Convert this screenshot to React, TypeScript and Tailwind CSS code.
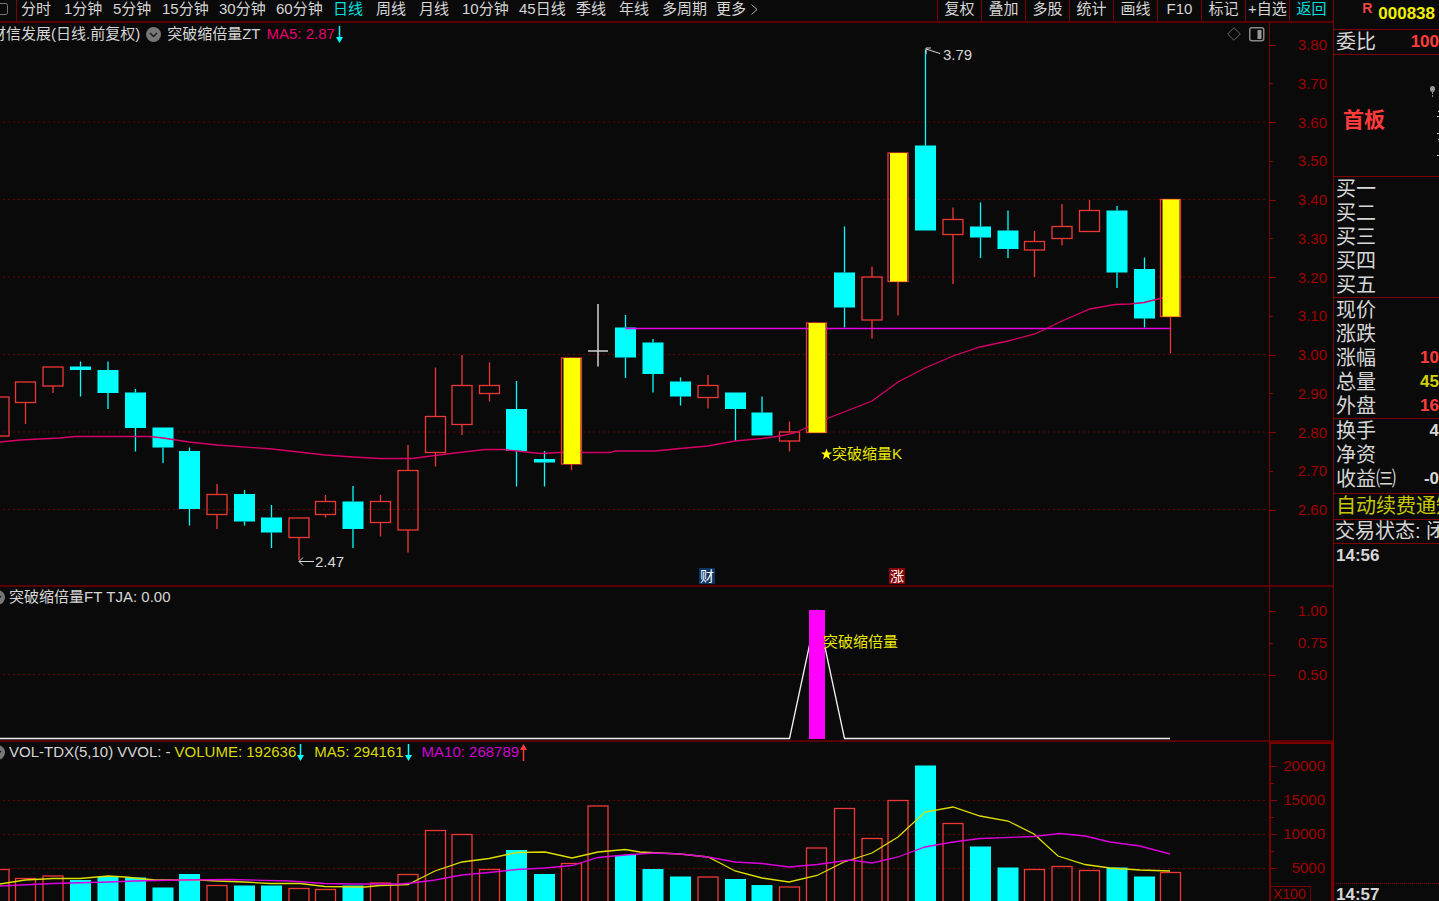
import type { ReactNode } from "react";

// x, kind, high, top, bottom, low, volume top
// kinds: u = hollow rise, d = solid fall, y = highlighted breakout, w = doji
type Kind = "u" | "d" | "y" | "w";
type Bar = [number, Kind, number, number, number, number, number];

const bars: Bar[] = [
  [-1, "u", 397, 397, 436, 436, 869.5],
  [25.5, "u", 382, 382, 402.5, 424, 878.5],
  [53, "u", 367, 367, 386, 393, 876],
  [80.5, "d", 361.5, 366.5, 370, 396.5, 880],
  [108, "d", 361.5, 370, 393, 409, 877],
  [135.5, "d", 389, 392.5, 428, 451.5, 877.5],
  [163, "d", 427.5, 427.5, 447.5, 463, 887.5],
  [189.5, "d", 447.5, 451, 509, 525.5, 874],
  [217, "u", 484, 494.5, 514.5, 529, 885.5],
  [244.5, "d", 490, 494, 521.5, 525.5, 885.5],
  [271.5, "d", 505, 517.5, 532.5, 548, 885.5],
  [299, "u", 518, 518, 537.5, 560, 888.5],
  [325.5, "u", 495, 501.5, 514.5, 517.5, 889.5],
  [353, "d", 486, 501.5, 529, 548, 885.5],
  [380.5, "u", 495, 501.5, 522.5, 536.5, 883],
  [408, "u", 445, 470.5, 530, 552.5, 874.5],
  [435.5, "u", 367.5, 416.5, 452.5, 466.5, 830.5],
  [462, "u", 355, 385.5, 424.5, 435, 834.5],
  [489.5, "u", 362.5, 385.5, 393.5, 401.5, 869.5],
  [516.5, "d", 381, 409, 451, 486.5, 850],
  [544.5, "d", 451, 459, 462.5, 486.5, 874],
  [571.5, "y", 358, 358, 464, 470, 863.5],
  [598, "w", 304, 351, 351, 366.5, 806],
  [625.5, "d", 315, 327.5, 357.5, 378, 855],
  [653, "d", 339, 342.5, 374, 392.5, 869],
  [680.5, "d", 377.5, 381.5, 396.5, 405.5, 876.5],
  [708, "u", 375, 385.5, 397.5, 408.5, 877],
  [735.5, "d", 392.5, 392.5, 409, 441, 879],
  [762, "d", 396.5, 412.5, 435.5, 435.5, 885],
  [789.5, "u", 421.5, 432, 441, 451.5, 887],
  [816.5, "y", 323, 323, 432.5, 432.5, 848],
  [844.5, "d", 226.5, 272.5, 307.5, 327.5, 808.5],
  [872, "u", 266.5, 277, 320, 338.5, 838.5],
  [898, "y", 153, 153, 281.5, 315.5, 800.5],
  [925.5, "d", 50, 145.5, 230.5, 230.5, 765.5],
  [953, "u", 207.5, 219.5, 234.5, 284, 823.5],
  [980.5, "d", 202.5, 226.5, 237.5, 258, 846.5],
  [1008, "d", 210.5, 230.5, 249, 258, 867.5],
  [1034.5, "u", 231, 241.5, 250, 277, 869.5],
  [1062, "u", 204, 226.5, 238.5, 245.5, 866.5],
  [1089.5, "u", 200, 210.5, 231.5, 231.5, 870.5],
  [1117, "d", 206, 210.5, 272.5, 288, 867.5],
  [1144.5, "d", 257.5, 269, 318.5, 327.5, 876.5],
  [1170.5, "y", 199.5, 199.5, 316.5, 353.5, 872.5],
];

// gapped up but closed under its open: solid candle, hollow volume
const GAP_UP_X = 844.5;

const PRICE_MA =
  "0,442 20,440 40,439 60,438 75,436.5 150,436.5 163,438 189,442 217,445 272,449 325,455 353,457 380,458.5 412,458.5 435,455.5 455,453 485,449.5 503,449.5 517,451 540,453.5 560,452.5 610,452.5 615,451 655,451 680,448.5 708,446 735,441 762,438.5 780,436 795,433 808,427 826,419 844,412 872,401 898,382 925,368 953,356 980,347 1008,341 1035,334 1062,321 1090,309 1115,304.5 1130,304 1144,302.5 1162,298 1170,297";
const VOL_MA5 =
  "0,884 25,880 53,878.5 80,878.5 108,876 125,877 155,880 200,880 217,881 244,882 270,883.5 300,883.5 325,886.5 365,887 380,885.5 408,884.5 417,880 435,871 462,862 489,858.5 505,855 517,852.5 545,852 572,858 598,852 625,849.5 640,852 680,854 708,857 720,863 735,871 762,878 789,882 817,875.5 844,862 872,853 898,837 925,812 953,807 980,816 1008,821 1034,834 1058,856 1085,864.5 1110,868 1140,870 1170,871";
const VOL_MA10 =
  "0,886 53,883.5 108,882 135,881 180,880 230,879.5 290,881 325,883.5 353,884 400,884 412,883 435,880 462,875 489,872.5 517,869.5 545,868 572,865.5 598,857.5 625,855 653,853 680,854 708,857 735,862 762,863.5 789,867 817,864.5 850,860 872,863 898,857 925,847 953,842 980,838.5 1034,836.5 1060,833.5 1085,836 1110,842 1140,846 1170,854";

const RED = "#ee3838";
const CYAN = "#00ffff";

const periods = [
  ["分时", "w-[43px]"],
  ["1分钟", "w-[49px]"],
  ["5分钟", "w-[49px]"],
  ["15分钟", "w-[57px]"],
  ["30分钟", "w-[57px]"],
  ["60分钟", "w-[57px]"],
  ["日线", "w-[43px]"],
  ["周线", "w-[43px]"],
  ["月线", "w-[43px]"],
  ["10分钟", "w-[57px]"],
  ["45日线", "w-[57px]"],
  ["季线", "w-[43px]"],
  ["年线", "w-[43px]"],
  ["多周期", "w-[54px]"],
];

const tools = ["复权", "叠加", "多股", "统计", "画线", "F10", "标记", "+自选", "返回"];

export default function App() {
  return (
    <div className="flex h-screen overflow-hidden bg-[#0a0a0a] font-['Liberation_Sans','Noto_Sans_CJK_SC',sans-serif] text-[15px] leading-4 whitespace-nowrap text-[#d6d6d6]">
      <main className="flex min-w-0 flex-1 flex-col">
        <Toolbar />
        <div className="grid min-h-0 flex-1 grid-rows-[564fr_155fr_159fr]">
          <PricePane />
          <SignalPane />
          <VolumePane />
        </div>
      </main>
      <Quote />
    </div>
  );
}

const Toolbar = () => (
  <header className="flex h-[23px] shrink-0 overflow-hidden border-b-2 border-[#5a0000]">
    <button aria-label="窗口" className="w-[17px] border-r border-[#800000]">
      <svg width="16" height="21" className="block" fill="none">
        <rect x="-4.5" y="3.5" width="12" height="11" rx="2" stroke="#777" />
      </svg>
    </button>
    <nav className="flex pb-[3px] pl-1">
      {periods.map(([name, width]) => (
        <button
          key={name}
          className={`${width} text-left ${name === "日线" ? "text-[#00e0e0]" : ""}`}
        >
          {name}
        </button>
      ))}
      <button className="flex items-center gap-1">
        更多
        <svg width="9" height="13" fill="none" stroke="#aaa">
          <path d="M1.5 1.5 7 6.5l-5.5 5" />
        </svg>
      </button>
    </nav>
    <div className="ml-auto flex">
      {tools.map((t) => (
        <button
          key={t}
          className={`w-11 border-l border-[#800000] pb-[3px] ${t === "返回" ? "text-[#00e0e0]" : ""}`}
        >
          {t}
        </button>
      ))}
    </div>
  </header>
);

const Pane = (props: {
  viewBox: string;
  title: ReactNode;
  drawing: ReactNode;
  axis: ReactNode;
  children?: ReactNode;
  last?: boolean;
}) => (
  <section
    className={`flex min-h-0 overflow-hidden ${props.last ? "" : "border-b-2 border-[#5a0000]"}`}
  >
    <div className="relative min-w-0 flex-1 overflow-hidden">
      <svg
        viewBox={props.viewBox}
        preserveAspectRatio="none"
        className="absolute inset-0 h-full w-full"
        fill="none"
      >
        {props.drawing}
      </svg>
      {props.title}
      {props.children}
    </div>
    {props.axis}
  </section>
);

const Grid = (props: { lines: number[] }) => (
  <>
    {props.lines.map((y) => (
      <path key={y} d={`M3 ${y}H1267`} stroke="#640000" strokeDasharray="2 3" />
    ))}
  </>
);

// labels with a dash in front get the short tick
const Scale = (props: { labels: string[]; className: string }) => (
  <div className={`flex flex-1 flex-col justify-between ${props.className}`}>
    {props.labels.map((l, i) => (
      <div key={i} className="flex h-4 items-center justify-between pr-[6px] text-[#a00000]">
        <span className={`h-px bg-[#900000] ${l.startsWith("-") ? "w-[3px]" : "w-[6px]"}`} />
        <span>{l.replace("-", "")}</span>
      </div>
    ))}
  </div>
);

const Collapse = () => (
  <button aria-label="指标" className="shrink-0">
    <svg width="15" height="15" className="block" fill="none">
      <circle cx="7.5" cy="7.5" r="7.5" fill="#777" />
      <path d="m4 6 3.5 3.5L11 6" stroke="#1a1a1a" strokeWidth="1.5" />
    </svg>
  </button>
);

const Arrow = (props: { up?: boolean }) =>
  props.up ? (
    <svg width="7" height="17" className="shrink-0">
      <path d="M3.5 4v13" stroke="#ff3c3c" strokeWidth="1.5" />
      <path d="M0 6 3.5 0 7 6z" fill="#ff3c3c" />
    </svg>
  ) : (
    <svg width="7" height="17" className="shrink-0">
      <path d="M3.5 0v13" stroke={CYAN} strokeWidth="1.5" />
      <path d="M0 11 3.5 17 7 11z" fill={CYAN} />
    </svg>
  );

const Reading = (props: { text: string; color: string; up?: boolean }) => (
  <span className={`mr-[6px] flex items-center gap-px ${props.color}`}>
    {props.text}
    <Arrow up={props.up} />
  </span>
);

const Candle = (props: { bar: Bar }) => {
  let [x, kind, high, top, bottom, low] = props.bar;
  if (kind === "w")
    return <path d={`M${x} ${high}V${low}M${x - 10} ${top}H${x + 10}`} stroke="#d0d0d0" strokeWidth="1.5" />;
  let color = kind === "d" ? CYAN : RED;
  return (
    <g strokeWidth="1.3">
      <path d={`M${x} ${high}V${top}M${x} ${bottom}V${low}`} stroke={color} />
      {kind === "d" ? (
        <rect x={x - 10.5} y={top} width="21" height={bottom - top} fill={CYAN} />
      ) : (
        <rect x={x - 10} y={top} width="20" height={bottom - top} stroke={RED} />
      )}
    </g>
  );
};

// label pinned to a spot of the plot, given as shares of its size
const Pin = (props: { x: number; y: number; className?: string; children: ReactNode }) => (
  <div
    className={`absolute flex -translate-y-1/2 items-center ${props.className || ""}`}
    style={{ left: `${props.x * 100}%`, top: `${props.y * 100}%` }}
  >
    {props.children}
  </div>
);

const PricePane = () => (
  <Pane
    viewBox="0 23 1269 562"
    title={
      <div className="relative flex h-[22px] items-center gap-[6px]">
        <span className="-ml-[9px]">财信发展(日线.前复权)</span>
        <Collapse />
        <span>突破缩倍量ZT</span>
        <Reading text="MA5: 2.87" color="text-[#e6006e]" />
        <svg width="14" height="14" className="ml-auto" fill="none" stroke="#666">
          <path d="M7 .7 13.3 7 7 13.3.7 7z" />
        </svg>
        <svg width="16" height="15" className="mr-1 ml-[2px]" fill="none">
          <rect x=".75" y=".75" width="14" height="13" rx="2" stroke="#888" strokeWidth="1.5" />
          <path d="M8.5 3h4v9h-4z" fill="#999" />
        </svg>
      </div>
    }
    drawing={
      <>
        <Grid lines={[122, 199.5, 277, 354.5, 432, 509.5]} />
        {bars.map((b) => (
          <Candle key={b[0]} bar={b} />
        ))}
        <path d="M625.5 328.5H1170.5" stroke="#e800e8" strokeWidth="1.5" />
        <polyline points={PRICE_MA} stroke="#d80068" strokeWidth="1.3" />
        {bars
          .filter((b) => b[1] === "y")
          .map((b) => (
            <rect key={b[0]} x={b[0] - 8} y={b[3]} width="17" height={b[4] - b[3]} fill="#ffff00" />
          ))}
        <path d="M940 53.5 926 49M926 54v-6h5M314 561.5H299M303 557.5l-4 4 4 4" stroke="#d8d8d8" />
      </>
    }
    axis={
      <div className="flex w-16 border-l border-[#800000]">
        <Scale
          className="pt-[14px] pb-[67px]"
          labels={[
            "3.80", "-3.70", "3.60", "-3.50", "3.40", "-3.30", "3.20",
            "-3.10", "3.00", "-2.90", "2.80", "-2.70", "2.60",
          ]}
        />
      </div>
    }
  >
    <Pin x={943 / 1269} y={32 / 562}>3.79</Pin>
    <Pin x={315 / 1269} y={539 / 562}>2.47</Pin>
    <Pin x={821 / 1269} y={431 / 562} className="text-[#e8e800]">
      <svg width="11" height="12" viewBox="0 0 11 11" fill="#ffff00">
        <path d="M5.5 0 7 4h4L7.8 6.5 9 11 5.5 8.3 2 11l1.2-4.5L0 4h4z" />
      </svg>
      突破缩量K
    </Pin>
    <Pin x={699 / 1269} y={553 / 562} className="h-4 w-4 justify-center bg-[#0c3566] text-sm text-white">
      财
    </Pin>
    <Pin x={889 / 1269} y={553 / 562} className="h-4 w-4 justify-center bg-[#8a0000] text-sm text-white">
      涨
    </Pin>
  </Pane>
);

const SignalPane = () => (
  <Pane
    viewBox="0 587 1269 153"
    title={
      <div className="relative -ml-[10px] flex h-5 items-center gap-1">
        <Collapse />
        <span>突破缩倍量FT</span>
        <span>TJA: 0.00</span>
      </div>
    }
    drawing={
      <>
        <Grid lines={[674.5]} />
        <path d="M0 738.5H789.5L817 610 844.5 738.5H1170" stroke="#f0f0f0" strokeWidth="1.3" />
        <path d="M809 610h16v129h-16z" fill="#ff00ff" />
      </>
    }
    axis={
      <div className="flex w-16 border-l border-[#800000]">
        <Scale className="pt-4 pb-[57px]" labels={["1.00", "-0.75", "0.50"]} />
      </div>
    }
  >
    <Pin x={823 / 1269} y={55 / 153} className="text-[#e8e800]">
      突破缩倍量
    </Pin>
  </Pane>
);

const VolumePane = () => (
  <Pane
    last
    viewBox="0 742 1269 159"
    title={
      <div className="relative -ml-[10px] flex h-5 items-center gap-1">
        <Collapse />
        <span>VOL-TDX(5,10)</span>
        <span>VVOL: -</span>
        <Reading text="VOLUME: 192636" color="text-[#dada00]" />
        <Reading text="MA5: 294161" color="text-[#dada00]" />
        <Reading text="MA10: 268789" color="text-[#d000d0]" up />
      </div>
    }
    drawing={
      <>
        <Grid lines={[800.5, 834.5, 868.5]} />
        {bars.map(([x, kind, , , , , v]) =>
          kind === "d" && x !== GAP_UP_X ? (
            <rect key={x} x={x - 10.5} y={v} width="21" height={905 - v} fill={CYAN} />
          ) : (
            <rect key={x} x={x - 10} y={v} width="20" height={905 - v} stroke={RED} strokeWidth="1.3" />
          )
        )}
        <polyline points={VOL_MA5} stroke="#dede00" strokeWidth="1.3" />
        <polyline points={VOL_MA10} stroke="#dc00dc" strokeWidth="1.3" />
      </>
    }
    axis={
      <div className="flex w-16 flex-col border-2 border-b-0 border-[#780000]">
        <Scale
          className="pt-[14px] pb-[10px]"
          labels={["20000", "-", "15000", "-", "10000", "-", "5000"]}
        />
        <div className="w-10 shrink-0 border-t border-r border-[#780000] pl-[2px] text-sm leading-[14px] text-[#a00000]">
          X100
        </div>
      </div>
    }
  />
);

const Row = (props: { label: string; value?: string; color?: string }) => (
  <div className="flex h-6 items-center justify-between">
    <dt>{props.label}</dt>
    <dd className={`text-[17px] font-bold ${props.color || ""}`}>{props.value}</dd>
  </div>
);

const Quote = () => (
  <aside className="flex w-[106px] shrink-0 flex-col overflow-hidden border-l border-[#800000] text-xl leading-6 *:shrink-0 *:border-[#800000]">
    <div className="flex h-[30px] justify-end gap-[6px] border-b pr-1 font-bold">
      <span className="text-sm leading-4 text-[#ee4444]">R</span>
      <span className="text-[17px] leading-[27px] text-[#f0f000]">000838</span>
    </div>
    <dl className="border-b pl-[2px]">
      <Row label="委比" value="100" color="text-[#ff3c3c]" />
    </dl>
    <div className="flex h-[122px] items-center justify-between border-b pl-[9px]">
      <strong className="pt-2 text-[21px] text-[#ff3c3c]">首板</strong>
      <svg width="11" height="121" fill="none">
        <ellipse cx="4.5" cy="34" rx="2.5" ry="3" fill="#999" />
        <path d="M4.5 35v7" stroke="#888" strokeDasharray="4 1" />
        <path d="M10 56.5h2M9 61.5h3M9 78.5h3M10 84.5h2M9 100.5h3" stroke="#ccc" />
      </svg>
    </div>
    <dl className="border-b pl-[2px]">
      <Row label="买一" />
      <Row label="买二" />
      <Row label="买三" />
      <Row label="买四" />
      <Row label="买五" />
    </dl>
    <dl className="border-b pl-[2px]">
      <Row label="现价" />
      <Row label="涨跌" />
      <Row label="涨幅" value="10" color="text-[#ff3c3c]" />
      <Row label="总量" value="45" color="text-[#d0d000]" />
      <Row label="外盘" value="16" color="text-[#ff3c3c]" />
    </dl>
    <dl className="border-b pb-[2px] pl-[2px]">
      <Row label="换手" value="4" />
      <Row label="净资" />
      <Row label="收益㈢" value="-0" />
    </dl>
    <div className="h-[26px] border-b pl-[2px] text-[#c8c800]">自动续费通知</div>
    <div className="h-6 border-b pl-px leading-[22px]">交易状态: 闭市</div>
    <time className="pl-[2px] text-[17px] font-bold">14:56</time>
    <time className="mt-auto h-[18px] border-t border-dotted pl-[2px] text-[17px] leading-[22px] font-bold">
      14:57
    </time>
  </aside>
);
